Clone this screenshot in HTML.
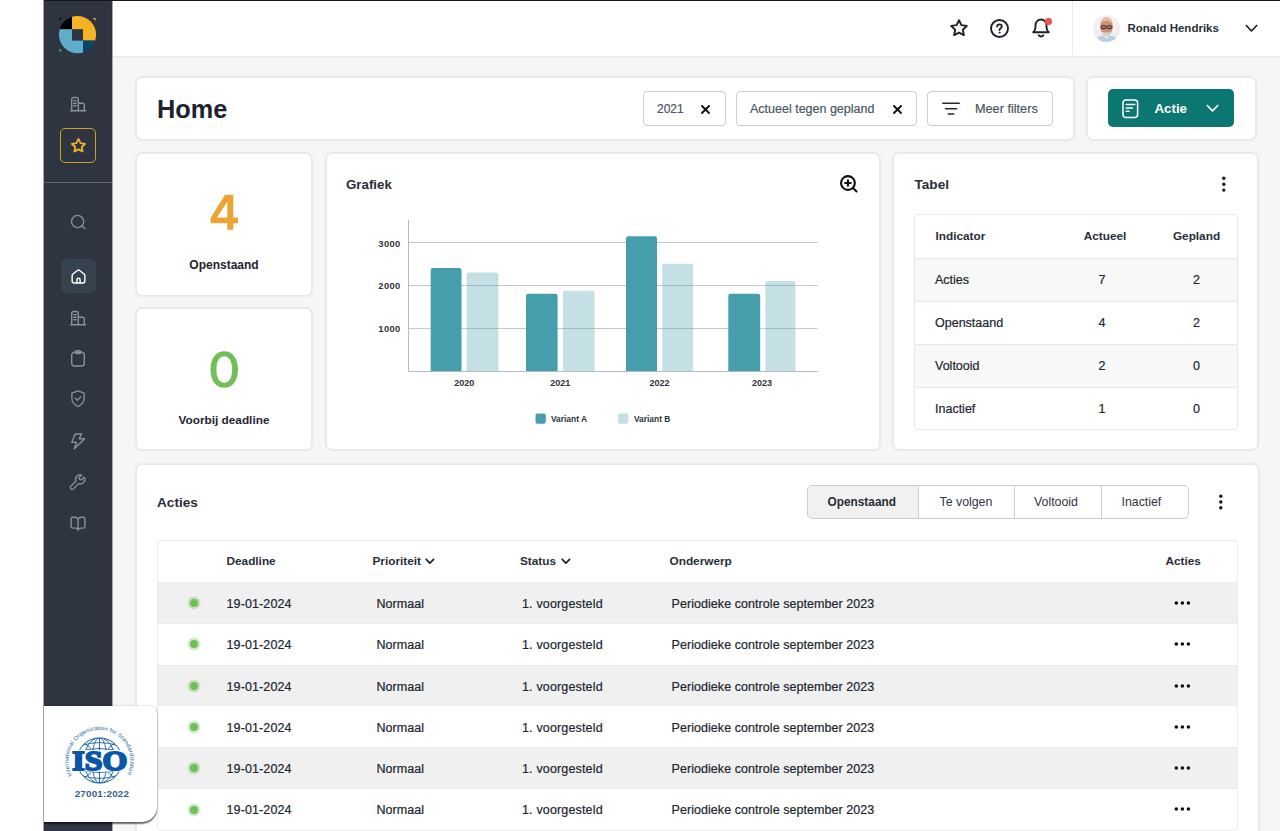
<!DOCTYPE html>
<html lang="nl">
<head>
<meta charset="utf-8">
<title>Home</title>
<style>
*{box-sizing:border-box;margin:0;padding:0}
html,body{width:1280px;height:831px;overflow:hidden}
body{position:relative;background:#f6f6f6;font-family:"Liberation Sans",sans-serif;color:#1f2633;font-size:12.5px}
.abs{position:absolute}
.t{position:absolute;white-space:nowrap;line-height:1}
.b{font-weight:700}
.card{position:absolute;background:#fff;border-radius:5px;box-shadow:0 0 0 2px rgba(0,0,0,.027),0 0 3px 1.500px rgba(0,0,0,.03)}
#strip{left:0;top:0;width:44px;height:831px;background:#fff}
#side{left:44px;top:0;width:68px;height:831px;background:#2e3440}
#topline{left:44px;top:0;width:1236px;height:1px;background:#14171c}
#topbar{left:112px;top:1px;width:1168px;height:54.500px;background:#fff;box-shadow:0 1px 2px rgba(0,0,0,.07)}
.pill{position:absolute;top:91px;height:34.500px;border:1px solid #c9cdd4;border-radius:4px;background:#fff}
.gtxt{color:#4c5664;-webkit-text-stroke:.2px #4c5664}
svg{position:absolute;overflow:visible}
.si{fill:none;stroke:#8a909b;stroke-width:1.4;stroke-linecap:round;stroke-linejoin:round}
.row{position:absolute;left:158px;width:1079px;height:41px;background:#efefef}
.dot{position:absolute;left:190px;width:8px;height:8px;border-radius:50%;background:#6fbf59;box-shadow:0 0 0 2.5px rgba(111,191,89,.32)}
.c{position:absolute;white-space:nowrap;line-height:1;font-size:12.5px;color:#20252f;-webkit-text-stroke:.2px #20252f}
.more{position:absolute;left:1174.300px;width:16px;height:4px}
.more i{position:absolute;top:0;width:3.8px;height:3.8px;border-radius:50%;background:#0c0e11}
</style>
</head>
<body>
<div id="side" class="abs"></div>
<div id="topbar" class="abs"></div>
<div id="topline" class="abs"></div>
<div class="abs" style="left:112px;top:1px;width:1px;height:830px;background:#a7a9af"></div>

<!-- SIDEBAR -->
<!-- logo -->
<svg style="left:58px;top:15px" width="40" height="40" viewBox="58 15 40 40">
  <defs><clipPath id="lc"><circle cx="77.5" cy="34.7" r="18.6"/></clipPath></defs>
  <g clip-path="url(#lc)">
    <rect x="58" y="15" width="14" height="14.2" fill="#000"/>
    <rect x="72" y="15" width="26" height="25.6" fill="#f5b324"/>
    <rect x="58" y="29.2" width="25" height="26" fill="#5eadca"/>
    <rect x="83" y="40.6" width="15" height="15" fill="#04476a"/>
    <rect x="72" y="29.2" width="11" height="11.4" fill="#2e3440"/>
  </g>
  <path d="M59.5 18 l2.6 0 l-2.6 2.6z" fill="#000"/>
  <path d="M95.6 18 l-2.8 0 l2.8 2.8z" fill="#f5b324"/>
  <path d="M59.5 51.2 l2.6 0 l-2.6 -2.6z" fill="#5eadca"/>
  <path d="M95.6 51.2 l-2.8 0 l2.8 -2.8z" fill="#04476a"/>
</svg>
<!-- building 1 -->
<svg style="left:70px;top:96px" width="16" height="16" viewBox="0 0 16 16" class="si"><path d="M1.7 14.6V3.2c0-1 .7-1.7 1.7-1.7h3.2c1 0 1.7.7 1.7 1.7v11.4M8.3 7.2h4.300c1 0 1.700.7 1.700 1.700v5.700M.6 14.700h15M3.800 4.600h2.400M3.800 7.200h2.400M3.800 9.800h2.400"/></svg>
<!-- star box -->
<div class="abs" style="left:60px;top:128px;width:36px;height:35px;border:1.2px solid #cda024;border-radius:5px"></div>
<svg style="left:69.500px;top:136.500px" width="17" height="17" viewBox="0 0 24 24" fill="none" stroke="#f2b522" stroke-width="2.5" stroke-linejoin="round"><path d="M12 2.800l2.850 5.900 6.450.9-4.700 4.500 1.150 6.400L12 17.450 6.250 20.500l1.150-6.400-4.700-4.500 6.450-.9z"/></svg>
<!-- divider -->
<div class="abs" style="left:44px;top:181.500px;width:68px;height:1px;background:#5b626e"></div>
<!-- search -->
<svg style="left:69px;top:213px" width="18" height="18" viewBox="0 0 18 18" class="si"><circle cx="8.600" cy="8.500" r="6.100"/><path d="M13.100 13l2.800 2.600"/></svg>
<!-- home box -->
<div class="abs" style="left:60.500px;top:259px;width:35px;height:34px;border-radius:5px;background:#37424f"></div>
<svg style="left:70.500px;top:268.600px" width="15" height="15" viewBox="0 0 16 16" fill="none" stroke="#fff" stroke-width="1.500" stroke-linecap="round" stroke-linejoin="round"><path d="M1.200 7.300c0-.8.300-1.400.9-1.900L6.800 1.600c.7-.6 1.700-.6 2.400 0l4.700 3.800c.6.500.9 1.100.9 1.900v5.500c0 1.200-.9 2.100-2.100 2.100H3.300c-1.200 0-2.100-.9-2.100-2.100z"/><path d="M6.300 14.800v-3.200c0-.9.700-1.700 1.700-1.700s1.700.8 1.700 1.700v3.200"/></svg>
<!-- building 2 -->
<svg style="left:70px;top:309.500px" width="16" height="16" viewBox="0 0 16 16" class="si"><path d="M1.700 14.600V3.200c0-1 .7-1.700 1.700-1.700h3.200c1 0 1.700.7 1.700 1.700v11.400M8.300 7.200h4.300c1 0 1.700.7 1.700 1.700v5.700M.6 14.700h15M3.800 4.600h2.400M3.800 7.200h2.400M3.800 9.800h2.400"/></svg>
<!-- clipboard -->
<svg style="left:70px;top:350px" width="16" height="17" viewBox="0 0 16 17" class="si"><rect x="1.700" y="2.300" width="12.600" height="13.700" rx="2.800"/><path d="M5.200 2.300c0-.9.700-1.500 1.500-1.500h2.600c.8 0 1.500.6 1.500 1.500s-.7 1.300-1.500 1.300H6.700c-.8 0-1.500-.4-1.500-1.300z"/></svg>
<!-- shield -->
<svg style="left:70px;top:390px" width="16" height="17.500" viewBox="0 0 16 18" class="si"><path d="M8 .9l6.300 2.300v5.600c0 3.700-2.700 6.600-6.300 8.300-3.600-1.700-6.300-4.600-6.300-8.300V3.200z"/><path d="M5.300 8.500l2 2 3.600-3.700"/></svg>
<!-- bolt -->
<svg style="left:70px;top:432.500px" width="16" height="17" viewBox="0 0 16 17" class="si"><path d="M5.200 1h6.300L9.300 5.800h5.300L4.300 15.800l2.200-6.400H1.800z"/></svg>
<!-- wrench -->
<svg style="left:70.300px;top:473.500px" width="16" height="16" viewBox="0 0 17 17" class="si"><path d="M15.300 3.200l-2.800 2.800-1.900-.5-.5-1.900L12.900.8C11.200.2 9.200.600 7.900 1.900 6.500 3.300 6.200 5.400 6.900 7.100L1.300 12.700c-.8.800-.8 2 0 2.800s2 .8 2.800 0l5.600-5.600c1.700.7 3.800.4 5.200-1 1.300-1.300 1.700-3.300 1.100-5z" transform="translate(-.5 .3)"/></svg>
<!-- book -->
<svg style="left:70px;top:515.500px" width="16" height="16" viewBox="0 0 16 16" class="si"><path d="M8 3.200v11.300M8 3.200C7.400 2 6.300 1.300 4.900 1.300H2.600c-.9 0-1.500.6-1.500 1.500v7.800c0 .9.600 1.500 1.500 1.500h3c1 0 1.900.6 2.400 1.500.5-.9 1.400-1.500 2.400-1.500h3c.9 0 1.500-.6 1.500-1.500V2.800c0-.9-.6-1.500-1.500-1.500h-2.300C9.700 1.300 8.600 2 8 3.200z"/></svg>


<!-- TOPBAR -->
<!-- star -->
<svg style="left:948.700px;top:18.200px" width="20" height="20" viewBox="0 0 24 24" fill="none" stroke="#1d2129" stroke-width="2.300" stroke-linejoin="round"><path d="M12 2.600l2.900 6 6.500.9-4.750 4.550 1.150 6.450L12 17.450 6.200 20.500l1.150-6.450L2.600 9.500l6.500-.9z"/></svg>
<!-- help -->
<svg style="left:990.200px;top:18.600px" width="19" height="19" viewBox="0 0 19 19" fill="none" stroke="#1d2129" stroke-width="1.900" stroke-linecap="round" stroke-linejoin="round"><circle cx="9.500" cy="9.500" r="8.500"/><path d="M7.200 7.600c0-1.300 1-2.200 2.300-2.200s2.300.9 2.300 2.100c0 1.700-2.300 1.900-2.300 3.500"/><circle cx="9.500" cy="13.600" r=".500" fill="#1d2129" stroke-width="1"/></svg>
<!-- bell -->
<svg style="left:1032.200px;top:17.800px" width="18" height="20" viewBox="0 0 18 20" fill="none" stroke="#1d2129" stroke-width="1.900" stroke-linecap="round" stroke-linejoin="round"><path d="M1.200 14.200c1.300-1 2.300-2.800 2.300-5.200V7.300c0-3.200 2.400-5.800 5.500-5.800s5.500 2.600 5.500 5.800V9c0 2.400 1 4.200 2.300 5.200z"/><path d="M6.700 17.300c.6.800 1.400 1.200 2.300 1.200s1.700-.4 2.300-1.200"/></svg>
<div class="abs" style="left:1045px;top:18px;width:6.700px;height:6.700px;border-radius:50%;background:#f4524d"></div>
<!-- divider -->
<div class="abs" style="left:1072px;top:1px;width:1px;height:54px;background:#ececed"></div>
<!-- avatar -->
<svg style="left:1093px;top:14.500px" width="27" height="27" viewBox="0 0 27 27">
  <defs><clipPath id="av"><circle cx="13.500" cy="13.500" r="13.500"/></clipPath>
  <radialGradient id="avbg" cx=".5" cy=".4" r=".7"><stop offset="0" stop-color="#fafafa"/><stop offset="1" stop-color="#e6e8ea"/></radialGradient></defs>
  <g clip-path="url(#av)">
    <rect width="27" height="27" fill="url(#avbg)"/>
    <path d="M2.500 27c.3-3.800 2.700-5.600 6.500-6.300h9c3.800.7 6.200 2.500 6.500 6.300z" fill="#b9cde2"/>
    <path d="M10.300 20.300l3.200 3.600 3.200-3.600z" fill="#e4ebf3"/>
    <ellipse cx="13.500" cy="11.600" rx="6.300" ry="9.400" fill="#cf8f74"/>
    <path d="M7.400 10c.2-5.300 2.700-7.800 6.100-7.800s5.900 2.500 6.100 7.800c-.8-2.600-2.800-3.900-6.100-3.900s-5.300 1.300-6.100 3.900z" fill="#e6b9a3"/>
    <path d="M7.900 15.500c1 3.700 3 5.600 5.600 5.600s4.600-1.900 5.600-5.600c-1.200 1.500-2.900 2.100-5.600 2.100s-4.400-.6-5.600-2.100z" fill="#d6cfc9"/>
    <rect x="8.200" y="10.800" width="4.700" height="2.800" rx=".9" fill="#b87f68" stroke="#2d2523" stroke-width=".9"/>
    <rect x="14.100" y="10.800" width="4.700" height="2.800" rx=".9" fill="#b87f68" stroke="#2d2523" stroke-width=".9"/>
  </g>
</svg>
<div class="t b" style="left:1127.500px;top:22.500px;font-size:11.500px;color:#2a2e38">Ronald Hendriks</div>
<svg style="left:1245px;top:24px" width="13" height="9" viewBox="0 0 13 9" fill="none" stroke="#1d2129" stroke-width="1.700" stroke-linecap="round" stroke-linejoin="round"><path d="M1.300 1.500l5.200 5.500 5.200-5.500"/></svg>


<!-- HEADER -->
<div class="card" style="left:136.800px;top:78px;width:935.800px;height:60.700px"></div>
<div class="card" style="left:1087.800px;top:78px;width:166.800px;height:60.700px"></div>
<div class="t b" style="left:157.400px;top:96px;font-size:26px;color:#1d2230;transform:scaleX(.973);transform-origin:0 0">Home</div>
<div class="pill" style="left:643px;width:83px"></div>
<div class="t gtxt" style="left:657px;top:102.500px;font-size:12px">2021</div>
<svg style="left:701.300px;top:104.700px" width="9" height="9" viewBox="0 0 9 9" stroke="#111" stroke-width="1.900" stroke-linecap="round"><path d="M1 1l7 7M8 1l-7 7"/></svg>
<div class="pill" style="left:736px;width:181px"></div>
<div class="t gtxt" style="left:750px;top:103.300px;font-size:12.500px">Actueel tegen gepland</div>
<svg style="left:892.700px;top:104.700px" width="9" height="9" viewBox="0 0 9 9" stroke="#111" stroke-width="1.900" stroke-linecap="round"><path d="M1 1l7 7M8 1l-7 7"/></svg>
<div class="pill" style="left:927px;width:126px"></div>
<svg style="left:942px;top:101.500px" width="18" height="13" viewBox="0 0 18 13" stroke="#23272f" stroke-width="1.500" stroke-linecap="round"><path d="M.8 1.300h16.400M3.400 6.800h11.200M6.300 12.100h5.400"/></svg>
<div class="t gtxt" style="left:975px;top:103.200px;font-size:12.700px">Meer filters</div>
<div class="abs" style="left:1108px;top:89px;width:126px;height:38px;border-radius:5px;background:#0b7770"></div>
<svg style="left:1122px;top:98.500px" width="17" height="20" viewBox="0 0 17 20" fill="none" stroke="#fff" stroke-width="1.500" stroke-linecap="round" stroke-linejoin="round"><rect x="1" y="1" width="14.600" height="17.600" rx="3"/><path d="M4.200 5.600h8.600M4.200 8.900h6.200M4.200 12.200h2.800"/></svg>
<div class="t b" style="left:1154.500px;top:101.500px;font-size:13.300px;color:#fff">Actie</div>
<svg style="left:1206px;top:103.500px" width="13" height="9" viewBox="0 0 13 9" fill="none" stroke="#fff" stroke-width="1.700" stroke-linecap="round" stroke-linejoin="round"><path d="M1.300 1.500l5.200 5.300 5.200-5.300"/></svg>


<!-- STATS -->
<div class="card" style="left:136.800px;top:154px;width:174.200px;height:140.700px"></div>
<div class="card" style="left:136.800px;top:309px;width:174.200px;height:140px"></div>
<svg style="left:0;top:0" width="1280" height="500" viewBox="0 0 1280 500"><path fill="#e9a535" fill-rule="evenodd" d="M225 194.800h8.300v22.700h4.700v5.700h-4.700v6.600h-6v-6.600h-16.800v-5.300zM227.300 201.700L217 217.500h10.300z"/><path fill="#72bf58" fill-rule="evenodd" d="M224.250 351.200c8.300 0 13.750 7 13.750 18.250s-5.450 18.250-13.750 18.250-13.750-7-13.750-18.250 5.450-18.250 13.750-18.250zm0 5c-4.900 0-7.850 4.900-7.850 13.250s2.950 13.250 7.850 13.250 7.850-4.900 7.850-13.250-2.950-13.250-7.850-13.250z"/></svg>
<div class="t b" style="left:124px;width:200px;text-align:center;top:259px;font-size:12px;color:#1f2430">Openstaand</div>
<div class="t b" style="left:124px;width:200px;text-align:center;top:414.500px;font-size:11.800px;color:#1f2430">Voorbij deadline</div>


<!-- CHART -->
<div class="card" style="left:327px;top:154px;width:551.500px;height:295px"></div>
<div class="t b" style="left:346px;top:177.500px;font-size:13.300px;color:#292e39">Grafiek</div>
<svg style="left:839px;top:175px" width="20" height="20" viewBox="0 0 20 20" fill="none" stroke="#0d0f12" stroke-width="2.100" stroke-linecap="round"><circle cx="8.950" cy="8" r="6.900"/><path d="M14 13l3.500 3.400M8.950 5.200v5.600M6.150 8h5.600"/></svg>
<svg style="left:0;top:0" width="1280" height="831" viewBox="0 0 1280 831">
  <g stroke-width="1" fill="none">
    <path stroke="#c6c8d1" d="M408.500 242.500H817.500M408.500 285.500H817.500M408.500 328.500H817.500"/>
    <path stroke="#b7bac4" d="M408.500 220V371.500H817.500"/>
  </g>
  <g fill="#469eac">
    <path d="M430.700 371V270.300a2.200 2.200 0 0 1 2.200-2.200h26.400a2.200 2.200 0 0 1 2.200 2.200V371z"/>
    <path d="M526 371V296a2.200 2.200 0 0 1 2.200-2.200h27.200a2.200 2.200 0 0 1 2.200 2.200V371z"/>
    <path d="M626 371V238.400a2.200 2.200 0 0 1 2.200-2.200h26.600a2.200 2.200 0 0 1 2.200 2.200V371z"/>
    <path d="M728.300 371V296a2.200 2.200 0 0 1 2.200-2.200h27.500a2.200 2.200 0 0 1 2.200 2.200V371z"/>
  </g>
  <g fill="#469eac" fill-opacity=".32">
    <path d="M466.700 371V274.700a2.200 2.200 0 0 1 2.200-2.200h27.300a2.200 2.200 0 0 1 2.200 2.200V371z"/>
    <path d="M562.900 371V292.900a2.200 2.200 0 0 1 2.200-2.200h27.300a2.200 2.200 0 0 1 2.200 2.200V371z"/>
    <path d="M662.200 371V266a2.200 2.200 0 0 1 2.200-2.200h26.500a2.200 2.200 0 0 1 2.200 2.200V371z"/>
    <path d="M765.300 371V283.100a2.200 2.200 0 0 1 2.200-2.200h25.800a2.200 2.200 0 0 1 2.200 2.200V371z"/>
  </g>
  <rect x="535.500" y="413.500" width="10.300" height="10.300" rx="2" fill="#469eac"/>
  <rect x="618" y="413.500" width="10.300" height="10.300" rx="2" fill="#c4e0e4"/>
  <g font-family="Liberation Sans, sans-serif" font-weight="700" font-size="9.400" fill="#30343d">
    <text x="400.600" y="247.100" text-anchor="end" letter-spacing=".35">3000</text>
    <text x="400.600" y="288.800" text-anchor="end" letter-spacing=".35">2000</text>
    <text x="400.600" y="332.100" text-anchor="end" letter-spacing=".35">1000</text>
    <text x="464.300" y="386" text-anchor="middle" font-size="9.100">2020</text>
    <text x="560.300" y="386" text-anchor="middle" font-size="9.100">2021</text>
    <text x="659.500" y="386" text-anchor="middle" font-size="9.100">2022</text>
    <text x="762" y="386" text-anchor="middle" font-size="9.100">2023</text>
    <text x="551" y="421.600" font-size="8.400">Variant A</text>
    <text x="634" y="421.600" font-size="8.400">Variant B</text>
  </g>
</svg>


<!-- TABEL -->
<div class="card" style="left:894.300px;top:154px;width:363px;height:295px"></div>
<div class="t b" style="left:914.500px;top:177.500px;font-size:13.600px;color:#292e39">Tabel</div>
<svg style="left:1221px;top:176px" width="6" height="17" viewBox="0 0 6 17" fill="#15181d"><circle cx="2.800" cy="2.200" r="1.700"/><circle cx="2.800" cy="8.200" r="1.700"/><circle cx="2.800" cy="14.100" r="1.700"/></svg>
<div class="abs" style="left:914px;top:214px;width:323.500px;height:216px;border:1px solid #e6e7e9;border-radius:3px;background:#fff;overflow:hidden">
  <div class="abs" style="left:0;top:42.500px;width:323px;height:1px;background:#e6e7e9"></div>
  <div class="abs" style="left:0;top:43.500px;width:323px;height:42.500px;background:#f8f8f8"></div>
  <div class="abs" style="left:0;top:85.500px;width:323px;height:1px;background:#e6e7e9"></div>
  <div class="abs" style="left:0;top:129px;width:323px;height:1px;background:#e6e7e9"></div>
  <div class="abs" style="left:0;top:130px;width:323px;height:42px;background:#f8f8f8"></div>
  <div class="abs" style="left:0;top:172px;width:323px;height:1px;background:#e6e7e9"></div>
</div>
<div class="t b" style="left:935.500px;top:230.500px;font-size:11.800px;color:#292e39">Indicator</div>
<div class="t b" style="left:1055px;width:100px;text-align:center;top:230.500px;font-size:11.800px;color:#292e39">Actueel</div>
<div class="t b" style="left:1146.500px;width:100px;text-align:center;top:230.500px;font-size:11.800px;color:#292e39">Gepland</div>
<div class="c" style="left:935px;top:273.500px">Acties</div>
<div class="c" style="left:1052px;width:100px;text-align:center;top:273.500px">7</div>
<div class="c" style="left:1146.500px;width:100px;text-align:center;top:273.500px">2</div>
<div class="c" style="left:935px;top:316.500px">Openstaand</div>
<div class="c" style="left:1052px;width:100px;text-align:center;top:316.500px">4</div>
<div class="c" style="left:1146.500px;width:100px;text-align:center;top:316.500px">2</div>
<div class="c" style="left:935px;top:359.500px">Voltooid</div>
<div class="c" style="left:1052px;width:100px;text-align:center;top:359.500px">2</div>
<div class="c" style="left:1146.500px;width:100px;text-align:center;top:359.500px">0</div>
<div class="c" style="left:935px;top:402.500px">Inactief</div>
<div class="c" style="left:1052px;width:100px;text-align:center;top:402.500px">1</div>
<div class="c" style="left:1146.500px;width:100px;text-align:center;top:402.500px">0</div>


<!-- ACTIES -->
<div class="card" style="left:136.800px;top:464.500px;width:1121.500px;height:380px"></div>
<div class="t b" style="left:157px;top:496px;font-size:13.600px;color:#292e39">Acties</div>
<div class="abs" style="left:806.500px;top:485px;width:382.500px;height:33.500px;border:1px solid #c9cdd4;border-radius:5px;background:#fff;overflow:hidden"><div class="abs" style="left:0;top:0;width:110.500px;height:33px;background:#f1f1f1"></div><div class="abs" style="left:110.500px;top:0;width:1px;height:33px;background:#c9cdd4"></div><div class="abs" style="left:206px;top:0;width:1px;height:33px;background:#c9cdd4"></div><div class="abs" style="left:293px;top:0;width:1px;height:33px;background:#c9cdd4"></div></div>
<div class="t b" style="left:827.500px;top:497px;font-size:11.850px;color:#292e39">Openstaand</div>
<div class="t" style="left:939.500px;top:496px;font-size:12.350px;color:#30353f">Te volgen</div>
<div class="t" style="left:1034px;top:496px;font-size:12.350px;color:#30353f">Voltooid</div>
<div class="t" style="left:1121.500px;top:496px;font-size:12.350px;color:#30353f">Inactief</div>
<svg style="left:1217.500px;top:494px" width="6" height="17" viewBox="0 0 6 17" fill="#15181d"><circle cx="2.800" cy="2.200" r="1.700"/><circle cx="2.800" cy="8" r="1.700"/><circle cx="2.800" cy="13.800" r="1.700"/></svg>
<div class="abs" style="left:157px;top:540px;width:1080.500px;height:291px;border:1px solid #ececec;border-radius:3px;background:#fff"></div>
<div class="abs" style="left:158px;top:581.500px;width:1078.500px;height:1px;background:#e6e7e9"></div>
<div class="t b" style="left:226.500px;top:556px;font-size:11.800px;color:#292e39">Deadline</div>
<div class="t b" style="left:372.500px;top:556px;font-size:11.800px;color:#292e39">Prioriteit</div>
<svg style="left:425px;top:558px" width="10" height="7" viewBox="0 0 10 7" fill="none" stroke="#20252f" stroke-width="1.800" stroke-linecap="round" stroke-linejoin="round"><path d="M1.200 1.300l3.700 3.800 3.700-3.800"/></svg>
<div class="t b" style="left:520px;top:556px;font-size:11.800px;color:#292e39">Status</div>
<svg style="left:560.500px;top:558px" width="10" height="7" viewBox="0 0 10 7" fill="none" stroke="#20252f" stroke-width="1.800" stroke-linecap="round" stroke-linejoin="round"><path d="M1.200 1.300l3.700 3.800 3.700-3.800"/></svg>
<div class="t b" style="left:669.500px;top:556px;font-size:11.800px;color:#292e39">Onderwerp</div>
<div class="t b" style="left:1165.500px;top:556px;font-size:11.800px;color:#292e39">Acties</div>
<div class="abs" style="left:158px;top:582.3px;width:1078.500px;height:41.3px;background:#f0f0f0;box-shadow:inset 0 1px 0 #ebebeb,inset 0 -1px 0 #ebebeb"></div>
<div class="dot" style="top:599.2px"></div>
<div class="c" style="left:226.500px;top:597.75px;letter-spacing:.12px">19-01-2024</div>
<div class="c" style="left:376.500px;top:597.75px;letter-spacing:.05px">Normaal</div>
<div class="c" style="left:522px;top:597.75px;letter-spacing:.16px">1. voorgesteld</div>
<div class="c" style="left:671.500px;top:597.75px;letter-spacing:.06px">Periodieke controle september 2023</div>
<svg style="left:1170px;top:598.1px" width="24" height="10" viewBox="0 0 24 10" fill="#0c0e11"><circle cx="6.300" cy="5" r="1.800"/><circle cx="12.350" cy="5" r="1.800"/><circle cx="18.400" cy="5" r="1.800"/></svg>
<div class="dot" style="top:640.1px"></div>
<div class="c" style="left:226.500px;top:638.75px;letter-spacing:.12px">19-01-2024</div>
<div class="c" style="left:376.500px;top:638.75px;letter-spacing:.05px">Normaal</div>
<div class="c" style="left:522px;top:638.75px;letter-spacing:.16px">1. voorgesteld</div>
<div class="c" style="left:671.500px;top:638.75px;letter-spacing:.06px">Periodieke controle september 2023</div>
<svg style="left:1170px;top:639.0px" width="24" height="10" viewBox="0 0 24 10" fill="#0c0e11"><circle cx="6.300" cy="5" r="1.800"/><circle cx="12.350" cy="5" r="1.800"/><circle cx="18.400" cy="5" r="1.800"/></svg>
<div class="abs" style="left:158px;top:664.8px;width:1078.500px;height:41.3px;background:#f0f0f0;box-shadow:inset 0 1px 0 #ebebeb,inset 0 -1px 0 #ebebeb"></div>
<div class="dot" style="top:681.8px"></div>
<div class="c" style="left:226.500px;top:680.75px;letter-spacing:.12px">19-01-2024</div>
<div class="c" style="left:376.500px;top:680.75px;letter-spacing:.05px">Normaal</div>
<div class="c" style="left:522px;top:680.75px;letter-spacing:.16px">1. voorgesteld</div>
<div class="c" style="left:671.500px;top:680.75px;letter-spacing:.06px">Periodieke controle september 2023</div>
<svg style="left:1170px;top:680.7px" width="24" height="10" viewBox="0 0 24 10" fill="#0c0e11"><circle cx="6.300" cy="5" r="1.800"/><circle cx="12.350" cy="5" r="1.800"/><circle cx="18.400" cy="5" r="1.800"/></svg>
<div class="dot" style="top:723.0px"></div>
<div class="c" style="left:226.500px;top:721.75px;letter-spacing:.12px">19-01-2024</div>
<div class="c" style="left:376.500px;top:721.75px;letter-spacing:.05px">Normaal</div>
<div class="c" style="left:522px;top:721.75px;letter-spacing:.16px">1. voorgesteld</div>
<div class="c" style="left:671.500px;top:721.75px;letter-spacing:.06px">Periodieke controle september 2023</div>
<svg style="left:1170px;top:721.9px" width="24" height="10" viewBox="0 0 24 10" fill="#0c0e11"><circle cx="6.300" cy="5" r="1.800"/><circle cx="12.350" cy="5" r="1.800"/><circle cx="18.400" cy="5" r="1.800"/></svg>
<div class="abs" style="left:158px;top:747.3px;width:1078.500px;height:41.3px;background:#f0f0f0;box-shadow:inset 0 1px 0 #ebebeb,inset 0 -1px 0 #ebebeb"></div>
<div class="dot" style="top:764.2px"></div>
<div class="c" style="left:226.500px;top:762.75px;letter-spacing:.12px">19-01-2024</div>
<div class="c" style="left:376.500px;top:762.75px;letter-spacing:.05px">Normaal</div>
<div class="c" style="left:522px;top:762.75px;letter-spacing:.16px">1. voorgesteld</div>
<div class="c" style="left:671.500px;top:762.75px;letter-spacing:.06px">Periodieke controle september 2023</div>
<svg style="left:1170px;top:763.1px" width="24" height="10" viewBox="0 0 24 10" fill="#0c0e11"><circle cx="6.300" cy="5" r="1.800"/><circle cx="12.350" cy="5" r="1.800"/><circle cx="18.400" cy="5" r="1.800"/></svg>
<div class="dot" style="top:805.5px"></div>
<div class="c" style="left:226.500px;top:803.75px;letter-spacing:.12px">19-01-2024</div>
<div class="c" style="left:376.500px;top:803.75px;letter-spacing:.05px">Normaal</div>
<div class="c" style="left:522px;top:803.75px;letter-spacing:.16px">1. voorgesteld</div>
<div class="c" style="left:671.500px;top:803.75px;letter-spacing:.06px">Periodieke controle september 2023</div>
<svg style="left:1170px;top:804.4px" width="24" height="10" viewBox="0 0 24 10" fill="#0c0e11"><circle cx="6.300" cy="5" r="1.800"/><circle cx="12.350" cy="5" r="1.800"/><circle cx="18.400" cy="5" r="1.800"/></svg>

<!-- ISO -->
<div class="abs" style="left:44px;top:705.500px;width:113px;height:116.500px;background:#fff;border-radius:0 7px 15px 0;box-shadow:0 1.200px 1.500px rgba(0,0,0,.55),0 0 2.500px rgba(0,0,0,.18)"></div>
<svg style="left:44px;top:705px" width="114" height="117" viewBox="44 705 114 117">
  <defs>
    <clipPath id="gl"><circle cx="99.500" cy="760.500" r="22.600"/></clipPath>
    <path id="arc" d="M72.100 775.400A31 31 0 1 1 126.900 775.400"/>
  </defs>
  <g fill="none" stroke="#1a5fab" stroke-width=".9" clip-path="url(#gl)">
    <ellipse cx="99.500" cy="760.500" rx="7.500" ry="22.600"/>
    <ellipse cx="99.500" cy="760.500" rx="15.500" ry="22.600"/>
    <path d="M99.500 737V784"/>
    <path d="M76 752.500Q99.500 744.500 123 752.500M81 745.600Q99.500 739.600 118 745.600"/>
    <path d="M76 768.500Q99.500 776.500 123 768.500M81 775.400Q99.500 781.400 118 775.400"/>
    <path d="M84 742.500L91 748.500M115 742.500L108 748.500M84 778.500L91 772.500M115 778.500L108 772.500"/>
  </g>
  <circle cx="99.500" cy="760.500" r="22.600" fill="none" stroke="#1a5fab" stroke-width="1"/>
  <rect x="70" y="750" width="60" height="21.500" fill="#fff"/>
  <text x="99.800" y="769.900" text-anchor="middle" font-family="Liberation Serif, serif" font-weight="700" font-size="27.300" fill="#0c56a6" stroke="#0c56a6" stroke-width="1.900" stroke-linejoin="miter" textLength="55" lengthAdjust="spacingAndGlyphs">ISO</text>
  <text font-family="Liberation Sans, sans-serif" font-size="5.600" fill="#2a64a8"><textPath href="#arc" textLength="126" lengthAdjust="spacingAndGlyphs">International Organization for Standardization</textPath></text>
  <text x="101.900" y="797.100" text-anchor="middle" font-family="Liberation Sans, sans-serif" font-weight="700" font-size="9.900" fill="#35608f" letter-spacing=".18">27001:2022</text>
</svg>

<div id="strip" class="abs"></div>
<div class="abs" style="left:43px;top:0;width:1px;height:831px;background:#a2a4aa"></div>
</body>
</html>
